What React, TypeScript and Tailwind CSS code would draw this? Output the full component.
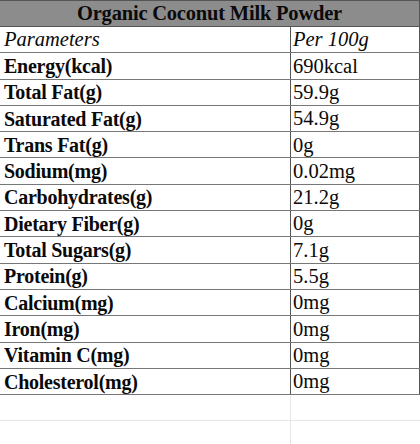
const rows: [string, string][] = [
  ['Energy(kcal)', '690kcal'],
  ['Total Fat(g)', '59.9g'],
  ['Saturated Fat(g)', '54.9g'],
  ['Trans Fat(g)', '0g'],
  ['Sodium(mg)', '0.02mg'],
  ['Carbohydrates(g)', '21.2g'],
  ['Dietary Fiber(g)', '0g'],
  ['Total Sugars(g)', '7.1g'],
  ['Protein(g)', '5.5g'],
  ['Calcium(mg)', '0mg'],
  ['Iron(mg)', '0mg'],
  ['Vitamin C(mg)', '0mg'],
  ['Cholesterol(mg)', '0mg'],
];

export default function App() {
  return (
    <div className="w-[420px] h-[444px] overflow-hidden bg-white text-[#0a0a0a] font-['Liberation_Serif',serif]">
      <div className="border-t border-[#555]">
        <div className="h-[26px] bg-[#8c8c8c] border-b border-r border-[#555] flex items-center justify-center text-[20.5px] font-bold leading-none tracking-[-0.2px]">
          Organic Coconut Milk Powder
        </div>
        <div className="h-[26.3px] grid grid-cols-[291px_1fr] border-b border-[#777] text-[20.5px] italic leading-none">
          <div className="border-r border-[#555] pl-[4px] flex items-center">Parameters</div>
          <div className="border-r border-[#555] pl-[2px] flex items-center">Per 100g</div>
        </div>
        {rows.map(([k, v]) => (
          <div key={k} className="h-[26.3px] grid grid-cols-[291px_1fr] border-b border-[#777] leading-none">
            <div className="border-r border-[#555] pl-[4px] flex items-center font-bold text-[20px] tracking-[-0.25px]">{k}</div>
            <div className="border-r border-[#555] pl-[2px] flex items-center text-[20.5px]">{v}</div>
          </div>
        ))}
        {[0, 1].map(i => (
          <div key={i} className="h-[26.3px] grid grid-cols-[291px_1fr] border-b border-[#e6e6e6]">
            <div className="border-r border-[#e6e6e6]" />
            <div />
          </div>
        ))}
      </div>
    </div>
  );
}
